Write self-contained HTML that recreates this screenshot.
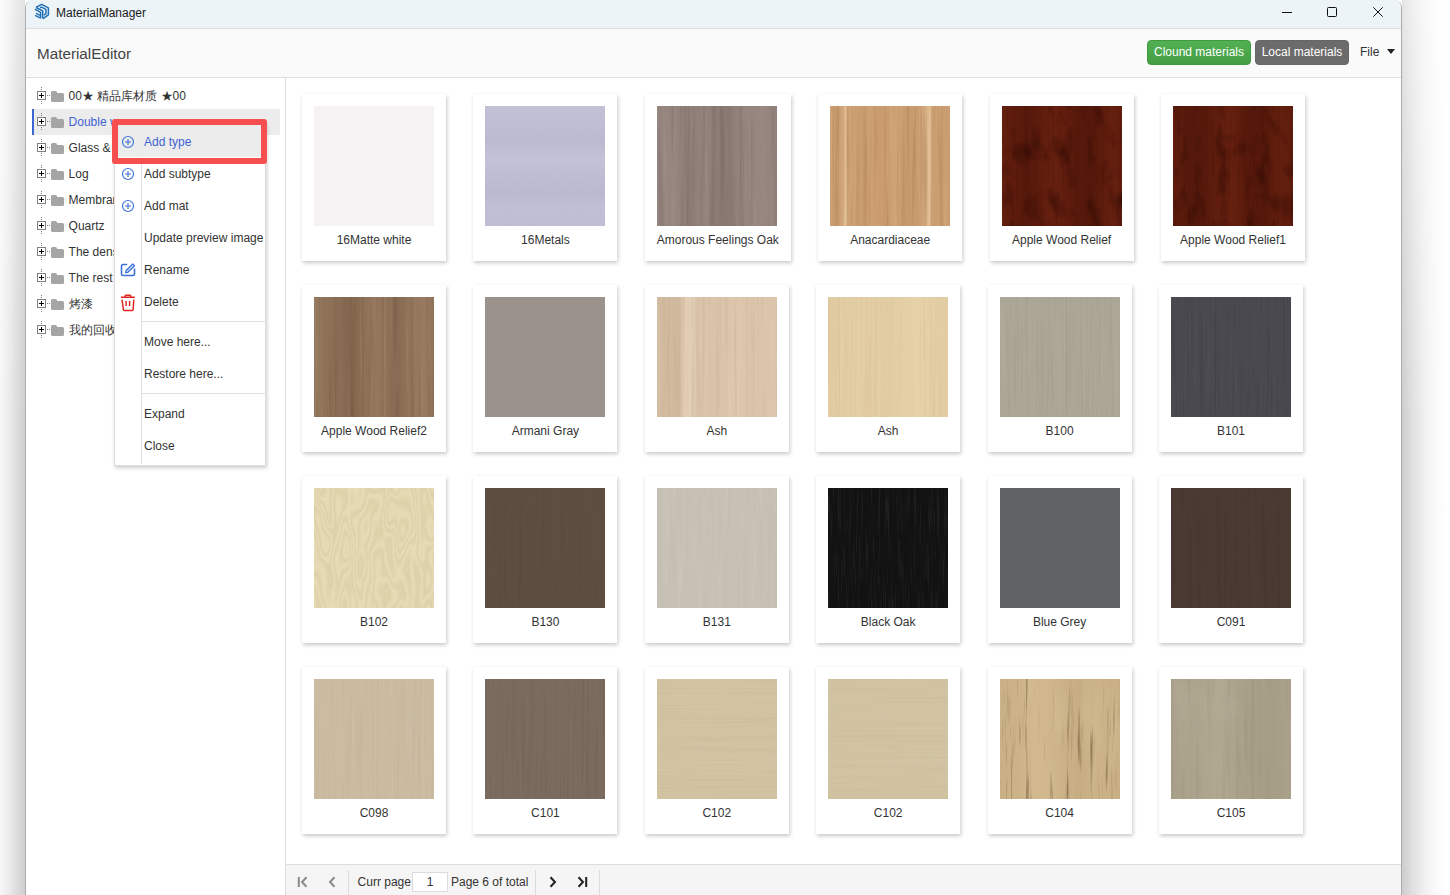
<!DOCTYPE html>
<html><head><meta charset="utf-8">
<style>
*{box-sizing:border-box;margin:0;padding:0}
html,body{width:1450px;height:895px;overflow:hidden}
body{position:relative;font-family:"Liberation Sans",sans-serif;font-size:12px;color:#333;background:#fff}
#shL,#shL2,#shR,#shR2{position:absolute;top:0;height:895px}
#shL,#shL2{left:0;width:25px}
#shR,#shR2{left:1402px;width:48px}
#shL{background:linear-gradient(90deg,#fcfcfc 0,#f5f5f5 8px,#ebebeb 16px,#e3e3e3 25px)}
#shL2{background:linear-gradient(90deg,rgba(0,0,0,.02),rgba(0,0,0,.04) 12px,rgba(0,0,0,.085) 25px);-webkit-mask-image:linear-gradient(180deg,transparent 0,#000 420px,#000 895px);mask-image:linear-gradient(180deg,transparent 0,#000 420px,#000 895px)}
#shR{background:linear-gradient(90deg,#e5e5e5 0,#efefef 10px,#f8f8f8 22px,#fdfdfd 36px,#fff 48px)}
#shR2{background:linear-gradient(90deg,rgba(0,0,0,.1) 0,rgba(0,0,0,.06) 12px,rgba(0,0,0,.02) 28px,transparent 44px);-webkit-mask-image:linear-gradient(180deg,transparent 0,#000 420px,#000 895px);mask-image:linear-gradient(180deg,transparent 0,#000 420px,#000 895px)}
.abs{position:absolute}
#win{position:absolute;left:25px;top:0;width:1377px;height:905px;border-left:1px solid #ababab;border-right:1px solid #ababab;border-top-left-radius:8px;border-top-right-radius:8px;background:#fff;overflow:hidden}
#title{position:absolute;left:0;top:0;width:1375px;height:29px;background:#edf4f8;border-bottom:1px solid #dfdfdf}
#title .t{position:absolute;left:30px;top:6px;font-size:12px;color:#1a1a1a;line-height:14px}
#hdr{position:absolute;left:0;top:29px;width:1375px;height:49px;background:#fafafa;border-bottom:1px solid #dddddd}
#hdr .t{position:absolute;left:11px;top:16px;font-size:15.25px;color:#444;line-height:17px}
.btn{position:absolute;top:11px;height:25px;border-radius:4px;color:#fff;font-size:12px;line-height:23px;text-align:center}
#left{position:absolute;left:0;top:78px;width:260px;height:827px;border-right:1px solid #dedede;background:#fff}
#content{position:absolute;left:260px;top:78px;width:1115px;height:786px;background:#fff}
#pager{position:absolute;left:260px;top:864px;width:1115px;height:41px;background:#f5f5f5;border-top:1px solid #dedede}
.row{position:absolute;left:6px;height:26px;width:248px}
.row.sel{background:#ececec;box-shadow:inset 2px 0 #3a66d0}
.row .tx{position:absolute;left:36.6px;top:6px;line-height:14px;white-space:nowrap;color:#333}
.row.sel .tx{color:#3f63d2}
.row i{position:absolute;display:block}
.row .bx{left:5px;top:8px;width:9px;height:9px;border:1px solid #808080;background:#fff}
.row .bx:before{content:"";position:absolute;left:1px;top:3px;width:5px;height:1px;background:#000}
.row .bx:after{content:"";position:absolute;left:3px;top:1px;width:1px;height:5px;background:#000}
.row .dv{left:9px;top:4px;width:1px;height:17px;background:repeating-linear-gradient(#808080 0 1px,transparent 1px 2px)}
.row .dh{left:15px;top:12px;width:3px;height:1px;background:repeating-linear-gradient(90deg,#808080 0 1px,transparent 1px 2px)}
.row .fd{left:19px;top:10px;width:13px;height:9px;background:#a5a5a5;border-radius:1.5px}
.row .fdt{left:19px;top:8px;width:6px;height:4px;background:#a5a5a5;border-radius:1.5px 1.5px 0 0}
.card{position:absolute;width:144px;height:167px;background:#fff;box-shadow:1px 2px 4px rgba(0,0,0,0.22)}
.card .im{position:absolute;left:12px;top:12px;width:120px;height:120px}
.card .lb{position:absolute;left:0;right:0;top:139px;text-align:center;line-height:14px;color:#333;white-space:nowrap}
#menu{position:absolute;left:88px;top:121px;width:152px;height:345px;background:#fff;border:1px solid #dcdcdc;box-shadow:1px 2px 4px rgba(0,0,0,0.2)}
.mi{position:absolute;left:0;width:150px;height:32px}
.mi.act{background:#ececec}
.mi .tx{position:absolute;left:29px;top:10px;line-height:14px;color:#333;white-space:nowrap}
.mi.act .tx{color:#3f63d2}
.mi .ic{position:absolute}
#msep{position:absolute;left:26px;top:2px;width:1px;height:340px;background:#e0e0e0}
.hsep{position:absolute;left:27px;width:124px;height:1px;background:#e0e0e0}
#red{position:absolute;left:86px;top:119px;width:155px;height:45px;border:6px solid #f74f4f;border-radius:3px}
.pg{position:absolute}
</style></head><body>
<div id="shL"></div><div id="shL2"></div><div id="shR"></div><div id="shR2"></div>
<div id="win">
 <div id="title">
  <svg class="abs" style="left:6px;top:2px" width="20" height="20" viewBox="0 0 20 20"><g fill="none" stroke="#1e6fb5" stroke-width="1.5" stroke-linejoin="round"><path d="M2.9 7.2L8.6 10.3V16.6"/><path d="M4 11.3L8 13.3"/><path d="M3.1 13.4L8 15.8"/><path d="M4 5.4L9.6 2.4L16.4 5.9V12.8L11 16.6"/><path d="M4.2 5.5L10.7 8.9V16.6"/><path d="M8 5.8L9.6 5.1L13.9 7.3V11.6L12 13.3"/></g></svg>
  <div class="t">MaterialManager</div>
  <div class="abs" style="left:1256px;top:12px;width:10px;height:1px;background:#111"></div>
  <div class="abs" style="left:1301px;top:7px;width:10px;height:10px;border:1px solid #111;border-radius:1.5px"></div>
  <svg class="abs" style="left:1347px;top:7px" width="10" height="10" viewBox="0 0 10 10"><path d="M0.3 0.3L9.7 9.7M9.7 0.3L0.3 9.7" stroke="#111" stroke-width="1"/></svg>
 </div>
 <div id="hdr">
  <div class="t">MaterialEditor</div>
  <div class="btn" style="left:1121px;width:104px;background:linear-gradient(#52b052,#449d44);border:1px solid #3f9a3f">Clound materials</div>
  <div class="btn" style="left:1229px;width:94px;background:#6b6b6b;border:1px solid #666">Local materials</div>
  <div class="abs" style="left:1334px;top:16px;line-height:14px;color:#333">File</div>
  <svg class="abs" style="left:1361px;top:20px" width="8" height="5" viewBox="0 0 8 5"><path d="M0 0H8L4 5Z" fill="#222"/></svg>
 </div>
 <div id="left"></div>
 <div id="content"></div>
 <div id="pager"></div>
<div class="row" style="top:83px"><i class="dv"></i><i class="bx"></i><i class="dh"></i><i class="fd"></i><i class="fdt"></i><span class="tx">00★ 精品库材质 ★00</span></div>
<div class="row sel" style="top:109px"><i class="dv"></i><i class="bx"></i><i class="dh"></i><i class="fd"></i><i class="fdt"></i><span class="tx">Double w</span></div>
<div class="row" style="top:135px"><i class="dv"></i><i class="bx"></i><i class="dh"></i><i class="fd"></i><i class="fdt"></i><span class="tx">Glass &amp; Mirror</span></div>
<div class="row" style="top:161px"><i class="dv"></i><i class="bx"></i><i class="dh"></i><i class="fd"></i><i class="fdt"></i><span class="tx">Log</span></div>
<div class="row" style="top:187px"><i class="dv"></i><i class="bx"></i><i class="dh"></i><i class="fd"></i><i class="fdt"></i><span class="tx">Membrane</span></div>
<div class="row" style="top:213px"><i class="dv"></i><i class="bx"></i><i class="dh"></i><i class="fd"></i><i class="fdt"></i><span class="tx">Quartz</span></div>
<div class="row" style="top:239px"><i class="dv"></i><i class="bx"></i><i class="dh"></i><i class="fd"></i><i class="fdt"></i><span class="tx">The density board</span></div>
<div class="row" style="top:265px"><i class="dv"></i><i class="bx"></i><i class="dh"></i><i class="fd"></i><i class="fdt"></i><span class="tx">The rest</span></div>
<div class="row" style="top:291px"><i class="dv"></i><i class="bx"></i><i class="dh"></i><i class="fd"></i><i class="fdt"></i><span class="tx">烤漆</span></div>
<div class="row" style="top:317px"><i class="dv"></i><i class="bx"></i><i class="dh"></i><i class="fd"></i><i class="fdt"></i><span class="tx">我的回收站</span></div>
<div class="card" style="left:276.0px;top:94px;width:144px"><div class="im" style="background:#f6f2f3"></div><div class="lb">16Matte white</div></div>
<div class="card" style="left:447.4px;top:94px;width:144px"><div class="im" style="background:linear-gradient(180deg,#c2c1d6 0px,#bfbed4 18px,#bbbad0 35px,#c3c2d7 53px,#bebdd3 70px,#bab9cf 87px,#c0bfd5 100px,#bfbed4 120px)"><svg width="120" height="120" viewBox="0 0 120 120" style="position:absolute;left:0;top:0"><filter id="f1" x="0" y="0" width="100%" height="100%" color-interpolation-filters="sRGB"><feTurbulence type="fractalNoise" baseFrequency="0.9 0.9" numOctaves="1" seed="2"/><feColorMatrix type="matrix" values="0 0 0 0 0.663 0 0 0 0 0.659 0 0 0 0 0.753 1.200 0 0 0 -0.600"/></filter><rect width="120" height="120" filter="url(#f1)" opacity="0.25"/></svg></div><div class="lb">16Metals</div></div>
<div class="card" style="left:618.8px;top:94px;width:146px"><div class="im" style="background:linear-gradient(90deg,#95857f 0px,#96867f 18px,#8a7a72 32px,#94847e 47px,#87776f 66px,#96867f 86px,#97877f 106px,#91817b 120px)"><svg width="120" height="120" viewBox="0 0 120 120" style="position:absolute;left:0;top:0"><filter id="f2" x="0" y="0" width="100%" height="100%" color-interpolation-filters="sRGB"><feTurbulence type="fractalNoise" baseFrequency="0.22 0.005" numOctaves="3" seed="3"/><feColorMatrix type="matrix" values="0 0 0 0 0.416 0 0 0 0 0.353 0 0 0 0 0.329 -1.600 0 0 0 0.800"/></filter><rect width="120" height="120" filter="url(#f2)" opacity="0.70"/><filter id="f3" x="0" y="0" width="100%" height="100%" color-interpolation-filters="sRGB"><feTurbulence type="fractalNoise" baseFrequency="0.3 0.006" numOctaves="3" seed="33"/><feColorMatrix type="matrix" values="0 0 0 0 0.710 0 0 0 0 0.647 0 0 0 0 0.624 1.400 0 0 0 -0.770"/></filter><rect width="120" height="120" filter="url(#f3)" opacity="0.60"/></svg></div><div class="lb">Amorous Feelings Oak</div></div>
<div class="card" style="left:792.2px;top:94px;width:144px"><div class="im" style="background:linear-gradient(90deg,#cb9e72 0px,#c6996d 8px,#d2a97d 13px,#e2c196 15.5px,#cfa476 18px,#c99c6e 30px,#cea174 40px,#c7996c 55px,#d0a478 65px,#c79a6d 78px,#cb9e72 90px,#d8b387 97px,#e4c398 99.5px,#cc9f72 102px,#c99d71 120px)"><svg width="120" height="120" viewBox="0 0 120 120" style="position:absolute;left:0;top:0"><filter id="f4" x="0" y="0" width="100%" height="100%" color-interpolation-filters="sRGB"><feTurbulence type="fractalNoise" baseFrequency="0.3 0.006" numOctaves="3" seed="4"/><feColorMatrix type="matrix" values="0 0 0 0 0.604 0 0 0 0 0.424 0 0 0 0 0.251 -1.600 0 0 0 0.800"/></filter><rect width="120" height="120" filter="url(#f4)" opacity="0.60"/><filter id="f5" x="0" y="0" width="100%" height="100%" color-interpolation-filters="sRGB"><feTurbulence type="fractalNoise" baseFrequency="0.35 0.006" numOctaves="3" seed="44"/><feColorMatrix type="matrix" values="0 0 0 0 0.910 0 0 0 0 0.784 0 0 0 0 0.627 1.400 0 0 0 -0.770"/></filter><rect width="120" height="120" filter="url(#f5)" opacity="0.50"/></svg></div><div class="lb">Anacardiaceae</div></div>
<div class="card" style="left:963.6px;top:94px;width:144px"><div class="im" style="background:linear-gradient(90deg,#64200f 0px,#5e1c0d 10px,#56190b 25px,#5c1b0c 35px,#66200f 50px,#621e0e 62px,#57190b 75px,#54180a 90px,#5e1c0d 100px,#65200f 110px,#601d0e 120px)"><svg width="120" height="120" viewBox="0 0 120 120" style="position:absolute;left:0;top:0"><filter id="f6" x="0" y="0" width="100%" height="100%" color-interpolation-filters="sRGB"><feTurbulence type="fractalNoise" baseFrequency="0.07 0.035" numOctaves="3" seed="5"/><feColorMatrix type="matrix" values="0 0 0 0 0.165 0 0 0 0 0.031 0 0 0 0 0.012 -2.000 0 0 0 1.000"/></filter><rect width="120" height="120" filter="url(#f6)" opacity="0.70"/><filter id="f7" x="0" y="0" width="100%" height="100%" color-interpolation-filters="sRGB"><feTurbulence type="fractalNoise" baseFrequency="0.4 0.01" numOctaves="3" seed="55"/><feColorMatrix type="matrix" values="0 0 0 0 0.227 0 0 0 0 0.055 0 0 0 0 0.024 -1.500 0 0 0 0.750"/></filter><rect width="120" height="120" filter="url(#f7)" opacity="0.40"/></svg></div><div class="lb">Apple Wood Relief</div></div>
<div class="card" style="left:1135.0px;top:94px;width:144px"><div class="im" style="background:linear-gradient(90deg,#601d0e 0px,#55190b 15px,#56190b 30px,#611e0e 45px,#66200f 60px,#57190b 75px,#54180a 90px,#631f0e 105px,#601d0e 120px)"><svg width="120" height="120" viewBox="0 0 120 120" style="position:absolute;left:0;top:0"><filter id="f8" x="0" y="0" width="100%" height="100%" color-interpolation-filters="sRGB"><feTurbulence type="fractalNoise" baseFrequency="0.07 0.035" numOctaves="3" seed="6"/><feColorMatrix type="matrix" values="0 0 0 0 0.165 0 0 0 0 0.031 0 0 0 0 0.012 -2.000 0 0 0 1.000"/></filter><rect width="120" height="120" filter="url(#f8)" opacity="0.70"/><filter id="f9" x="0" y="0" width="100%" height="100%" color-interpolation-filters="sRGB"><feTurbulence type="fractalNoise" baseFrequency="0.4 0.01" numOctaves="3" seed="66"/><feColorMatrix type="matrix" values="0 0 0 0 0.227 0 0 0 0 0.055 0 0 0 0 0.024 -1.500 0 0 0 0.750"/></filter><rect width="120" height="120" filter="url(#f9)" opacity="0.40"/></svg></div><div class="lb">Apple Wood Relief1</div></div>
<div class="card" style="left:276.0px;top:285px;width:144px"><div class="im" style="background:linear-gradient(90deg,#96795f 0px,#8e7258 12px,#896d54 25px,#81654c 38px,#8b6f55 48px,#95785e 60px,#8f7359 72px,#856950 82px,#91755b 95px,#977a60 110px,#8f7359 120px)"><svg width="120" height="120" viewBox="0 0 120 120" style="position:absolute;left:0;top:0"><filter id="f10" x="0" y="0" width="100%" height="100%" color-interpolation-filters="sRGB"><feTurbulence type="fractalNoise" baseFrequency="0.25 0.006" numOctaves="3" seed="7"/><feColorMatrix type="matrix" values="0 0 0 0 0.396 0 0 0 0 0.302 0 0 0 0 0.220 -1.600 0 0 0 0.800"/></filter><rect width="120" height="120" filter="url(#f10)" opacity="0.55"/><filter id="f11" x="0" y="0" width="100%" height="100%" color-interpolation-filters="sRGB"><feTurbulence type="fractalNoise" baseFrequency="0.3 0.008" numOctaves="3" seed="77"/><feColorMatrix type="matrix" values="0 0 0 0 0.702 0 0 0 0 0.604 0 0 0 0 0.510 1.600 0 0 0 -0.880"/></filter><rect width="120" height="120" filter="url(#f11)" opacity="0.50"/></svg></div><div class="lb">Apple Wood Relief2</div></div>
<div class="card" style="left:447.4px;top:285px;width:144px"><div class="im" style="background:#9b928c"></div><div class="lb">Armani Gray</div></div>
<div class="card" style="left:618.8px;top:285px;width:144px"><div class="im" style="background:linear-gradient(90deg,#d3bba0 0px,#d1b99e 22px,#e0cbb2 28px,#e3cfb7 33px,#dbc4a9 40px,#d9c2a7 60px,#ddc6ab 80px,#dac3a8 100px,#dcc5aa 120px)"><svg width="120" height="120" viewBox="0 0 120 120" style="position:absolute;left:0;top:0"><filter id="f12" x="0" y="0" width="100%" height="100%" color-interpolation-filters="sRGB"><feTurbulence type="fractalNoise" baseFrequency="0.35 0.006" numOctaves="3" seed="8"/><feColorMatrix type="matrix" values="0 0 0 0 0.690 0 0 0 0 0.596 0 0 0 0 0.502 -1.500 0 0 0 0.750"/></filter><rect width="120" height="120" filter="url(#f12)" opacity="0.50"/><filter id="f13" x="0" y="0" width="100%" height="100%" color-interpolation-filters="sRGB"><feTurbulence type="fractalNoise" baseFrequency="0.4 0.006" numOctaves="3" seed="88"/><feColorMatrix type="matrix" values="0 0 0 0 0.941 0 0 0 0 0.878 0 0 0 0 0.800 1.500 0 0 0 -0.825"/></filter><rect width="120" height="120" filter="url(#f13)" opacity="0.50"/></svg></div><div class="lb">Ash</div></div>
<div class="card" style="left:790.2px;top:285px;width:144px"><div class="im" style="background:linear-gradient(90deg,#e0caa1 0px,#e4cea5 30px,#e2cca3 60px,#e6d1a8 90px,#e2cca3 120px)"><svg width="120" height="120" viewBox="0 0 120 120" style="position:absolute;left:0;top:0"><filter id="f14" x="0" y="0" width="100%" height="100%" color-interpolation-filters="sRGB"><feTurbulence type="fractalNoise" baseFrequency="0.4 0.006" numOctaves="3" seed="9"/><feColorMatrix type="matrix" values="0 0 0 0 0.753 0 0 0 0 0.659 0 0 0 0 0.502 -1.300 0 0 0 0.650"/></filter><rect width="120" height="120" filter="url(#f14)" opacity="0.45"/><filter id="f15" x="0" y="0" width="100%" height="100%" color-interpolation-filters="sRGB"><feTurbulence type="fractalNoise" baseFrequency="0.4 0.006" numOctaves="3" seed="99"/><feColorMatrix type="matrix" values="0 0 0 0 0.949 0 0 0 0 0.894 0 0 0 0 0.769 1.300 0 0 0 -0.715"/></filter><rect width="120" height="120" filter="url(#f15)" opacity="0.50"/></svg></div><div class="lb">Ash</div></div>
<div class="card" style="left:961.6px;top:285px;width:144px"><div class="im" style="background:#aca697"><svg width="120" height="120" viewBox="0 0 120 120" style="position:absolute;left:0;top:0"><filter id="f16" x="0" y="0" width="100%" height="100%" color-interpolation-filters="sRGB"><feTurbulence type="fractalNoise" baseFrequency="0.5 0.008" numOctaves="3" seed="10"/><feColorMatrix type="matrix" values="0 0 0 0 0.541 0 0 0 0 0.518 0 0 0 0 0.459 -1.500 0 0 0 0.750"/></filter><rect width="120" height="120" filter="url(#f16)" opacity="0.50"/><filter id="f17" x="0" y="0" width="100%" height="100%" color-interpolation-filters="sRGB"><feTurbulence type="fractalNoise" baseFrequency="0.5 0.008" numOctaves="3" seed="110"/><feColorMatrix type="matrix" values="0 0 0 0 0.769 0 0 0 0 0.745 0 0 0 0 0.690 1.500 0 0 0 -0.750"/></filter><rect width="120" height="120" filter="url(#f17)" opacity="0.40"/></svg></div><div class="lb">B100</div></div>
<div class="card" style="left:1133.0px;top:285px;width:144px"><div class="im" style="background:#4a4950"><svg width="120" height="120" viewBox="0 0 120 120" style="position:absolute;left:0;top:0"><filter id="f18" x="0" y="0" width="100%" height="100%" color-interpolation-filters="sRGB"><feTurbulence type="fractalNoise" baseFrequency="0.5 0.008" numOctaves="3" seed="11"/><feColorMatrix type="matrix" values="0 0 0 0 0.180 0 0 0 0 0.176 0 0 0 0 0.200 -1.500 0 0 0 0.750"/></filter><rect width="120" height="120" filter="url(#f18)" opacity="0.50"/><filter id="f19" x="0" y="0" width="100%" height="100%" color-interpolation-filters="sRGB"><feTurbulence type="fractalNoise" baseFrequency="0.5 0.008" numOctaves="3" seed="111"/><feColorMatrix type="matrix" values="0 0 0 0 0.416 0 0 0 0 0.412 0 0 0 0 0.439 1.500 0 0 0 -0.825"/></filter><rect width="120" height="120" filter="url(#f19)" opacity="0.40"/></svg></div><div class="lb">B101</div></div>
<div class="card" style="left:276.0px;top:476px;width:144px"><div class="im" style="background:#e7dcb7"><svg width="120" height="120" viewBox="0 0 120 120" style="position:absolute;left:0;top:0"><filter id="f20" x="0" y="0" width="100%" height="100%" color-interpolation-filters="sRGB"><feTurbulence type="fractalNoise" baseFrequency="0.05 0.016" numOctaves="2" seed="12"/><feComponentTransfer><feFuncR type="table" tableValues="0 1 0 1 0 1 0 1 0 1 0 1 0 1 0 1 0"/></feComponentTransfer><feColorMatrix type="matrix" values="0 0 0 0 0.804 0 0 0 0 0.749 0 0 0 0 0.573 1.000 0 0 0 -0.000"/></filter><rect width="120" height="120" filter="url(#f20)" opacity="0.40"/></svg></div><div class="lb">B102</div></div>
<div class="card" style="left:447.4px;top:476px;width:144px"><div class="im" style="background:#5e4e42"><svg width="120" height="120" viewBox="0 0 120 120" style="position:absolute;left:0;top:0"><filter id="f21" x="0" y="0" width="100%" height="100%" color-interpolation-filters="sRGB"><feTurbulence type="fractalNoise" baseFrequency="0.5 0.008" numOctaves="3" seed="13"/><feColorMatrix type="matrix" values="0 0 0 0 0.275 0 0 0 0 0.220 0 0 0 0 0.180 -1.300 0 0 0 0.650"/></filter><rect width="120" height="120" filter="url(#f21)" opacity="0.40"/></svg></div><div class="lb">B130</div></div>
<div class="card" style="left:618.8px;top:476px;width:144px"><div class="im" style="background:#c7c0b4"><svg width="120" height="120" viewBox="0 0 120 120" style="position:absolute;left:0;top:0"><filter id="f22" x="0" y="0" width="100%" height="100%" color-interpolation-filters="sRGB"><feTurbulence type="fractalNoise" baseFrequency="0.15 0.01" numOctaves="3" seed="14"/><feColorMatrix type="matrix" values="0 0 0 0 0.847 0 0 0 0 0.827 0 0 0 0 0.792 1.600 0 0 0 -0.800"/></filter><rect width="120" height="120" filter="url(#f22)" opacity="0.60"/><filter id="f23" x="0" y="0" width="100%" height="100%" color-interpolation-filters="sRGB"><feTurbulence type="fractalNoise" baseFrequency="0.3 0.01" numOctaves="3" seed="114"/><feColorMatrix type="matrix" values="0 0 0 0 0.675 0 0 0 0 0.647 0 0 0 0 0.596 -1.300 0 0 0 0.650"/></filter><rect width="120" height="120" filter="url(#f23)" opacity="0.30"/></svg></div><div class="lb">B131</div></div>
<div class="card" style="left:790.2px;top:476px;width:144px"><div class="im" style="background:#121212"><svg width="120" height="120" viewBox="0 0 120 120" style="position:absolute;left:0;top:0"><filter id="f24" x="0" y="0" width="100%" height="100%" color-interpolation-filters="sRGB"><feTurbulence type="fractalNoise" baseFrequency="0.6 0.02" numOctaves="3" seed="15"/><feColorMatrix type="matrix" values="0 0 0 0 0.227 0 0 0 0 0.227 0 0 0 0 0.227 2.000 0 0 0 -1.000"/></filter><rect width="120" height="120" filter="url(#f24)" opacity="0.60"/></svg></div><div class="lb">Black Oak</div></div>
<div class="card" style="left:961.6px;top:476px;width:144px"><div class="im" style="background:#5f6364"></div><div class="lb">Blue Grey</div></div>
<div class="card" style="left:1133.0px;top:476px;width:144px"><div class="im" style="background:#4b3934"><svg width="120" height="120" viewBox="0 0 120 120" style="position:absolute;left:0;top:0"><filter id="f25" x="0" y="0" width="100%" height="100%" color-interpolation-filters="sRGB"><feTurbulence type="fractalNoise" baseFrequency="0.3 0.006" numOctaves="3" seed="16"/><feColorMatrix type="matrix" values="0 0 0 0 0.212 0 0 0 0 0.149 0 0 0 0 0.122 -1.300 0 0 0 0.650"/></filter><rect width="120" height="120" filter="url(#f25)" opacity="0.40"/></svg></div><div class="lb">C091</div></div>
<div class="card" style="left:276.0px;top:667px;width:144px"><div class="im" style="background:#cabba1"><svg width="120" height="120" viewBox="0 0 120 120" style="position:absolute;left:0;top:0"><filter id="f26" x="0" y="0" width="100%" height="100%" color-interpolation-filters="sRGB"><feTurbulence type="fractalNoise" baseFrequency="0.35 0.008" numOctaves="3" seed="17"/><feColorMatrix type="matrix" values="0 0 0 0 0.659 0 0 0 0 0.600 0 0 0 0 0.502 -1.300 0 0 0 0.650"/></filter><rect width="120" height="120" filter="url(#f26)" opacity="0.40"/><filter id="f27" x="0" y="0" width="100%" height="100%" color-interpolation-filters="sRGB"><feTurbulence type="fractalNoise" baseFrequency="0.35 0.008" numOctaves="3" seed="117"/><feColorMatrix type="matrix" values="0 0 0 0 0.878 0 0 0 0 0.831 0 0 0 0 0.737 1.300 0 0 0 -0.715"/></filter><rect width="120" height="120" filter="url(#f27)" opacity="0.40"/></svg></div><div class="lb">C098</div></div>
<div class="card" style="left:447.4px;top:667px;width:144px"><div class="im" style="background:#7b6b5e"><svg width="120" height="120" viewBox="0 0 120 120" style="position:absolute;left:0;top:0"><filter id="f28" x="0" y="0" width="100%" height="100%" color-interpolation-filters="sRGB"><feTurbulence type="fractalNoise" baseFrequency="0.4 0.008" numOctaves="3" seed="18"/><feColorMatrix type="matrix" values="0 0 0 0 0.361 0 0 0 0 0.306 0 0 0 0 0.259 -1.300 0 0 0 0.650"/></filter><rect width="120" height="120" filter="url(#f28)" opacity="0.45"/><filter id="f29" x="0" y="0" width="100%" height="100%" color-interpolation-filters="sRGB"><feTurbulence type="fractalNoise" baseFrequency="0.4 0.008" numOctaves="3" seed="118"/><feColorMatrix type="matrix" values="0 0 0 0 0.584 0 0 0 0 0.522 0 0 0 0 0.467 1.300 0 0 0 -0.715"/></filter><rect width="120" height="120" filter="url(#f29)" opacity="0.35"/></svg></div><div class="lb">C101</div></div>
<div class="card" style="left:618.8px;top:667px;width:144px"><div class="im" style="background:#d1c3a2"><svg width="120" height="120" viewBox="0 0 120 120" style="position:absolute;left:0;top:0"><filter id="f30" x="0" y="0" width="100%" height="100%" color-interpolation-filters="sRGB"><feTurbulence type="fractalNoise" baseFrequency="0.006 0.5" numOctaves="3" seed="19"/><feColorMatrix type="matrix" values="0 0 0 0 0.706 0 0 0 0 0.651 0 0 0 0 0.518 -1.300 0 0 0 0.650"/></filter><rect width="120" height="120" filter="url(#f30)" opacity="0.40"/><filter id="f31" x="0" y="0" width="100%" height="100%" color-interpolation-filters="sRGB"><feTurbulence type="fractalNoise" baseFrequency="0.006 0.5" numOctaves="3" seed="119"/><feColorMatrix type="matrix" values="0 0 0 0 0.902 0 0 0 0 0.855 0 0 0 0 0.753 1.300 0 0 0 -0.715"/></filter><rect width="120" height="120" filter="url(#f31)" opacity="0.40"/></svg></div><div class="lb">C102</div></div>
<div class="card" style="left:790.2px;top:667px;width:144px"><div class="im" style="background:#d1c3a2"><svg width="120" height="120" viewBox="0 0 120 120" style="position:absolute;left:0;top:0"><filter id="f32" x="0" y="0" width="100%" height="100%" color-interpolation-filters="sRGB"><feTurbulence type="fractalNoise" baseFrequency="0.006 0.5" numOctaves="3" seed="20"/><feColorMatrix type="matrix" values="0 0 0 0 0.706 0 0 0 0 0.651 0 0 0 0 0.518 -1.300 0 0 0 0.650"/></filter><rect width="120" height="120" filter="url(#f32)" opacity="0.40"/><filter id="f33" x="0" y="0" width="100%" height="100%" color-interpolation-filters="sRGB"><feTurbulence type="fractalNoise" baseFrequency="0.006 0.5" numOctaves="3" seed="120"/><feColorMatrix type="matrix" values="0 0 0 0 0.902 0 0 0 0 0.855 0 0 0 0 0.753 1.300 0 0 0 -0.715"/></filter><rect width="120" height="120" filter="url(#f33)" opacity="0.40"/></svg></div><div class="lb">C102</div></div>
<div class="card" style="left:961.6px;top:667px;width:144px"><div class="im" style="background:linear-gradient(90deg,#c9b086 0px,#ccb389 20px,#d2b98f 35px,#cfb68c 50px,#cab187 65px,#c6ad83 80px,#cbb288 100px,#c8af85 120px)"><svg width="120" height="120" viewBox="0 0 120 120" style="position:absolute;left:0;top:0"><filter id="f34" x="0" y="0" width="100%" height="100%" color-interpolation-filters="sRGB"><feTurbulence type="fractalNoise" baseFrequency="0.2 0.01" numOctaves="3" seed="21"/><feColorMatrix type="matrix" values="0 0 0 0 0.490 0 0 0 0 0.392 0 0 0 0 0.251 -4.000 0 0 0 1.520"/></filter><rect width="120" height="120" filter="url(#f34)" opacity="0.85"/><filter id="f35" x="0" y="0" width="100%" height="100%" color-interpolation-filters="sRGB"><feTurbulence type="fractalNoise" baseFrequency="0.3 0.012" numOctaves="3" seed="221"/><feColorMatrix type="matrix" values="0 0 0 0 0.553 0 0 0 0 0.455 0 0 0 0 0.314 -3.000 0 0 0 1.080"/></filter><rect width="120" height="120" filter="url(#f35)" opacity="0.60"/><filter id="f36" x="0" y="0" width="100%" height="100%" color-interpolation-filters="sRGB"><feTurbulence type="fractalNoise" baseFrequency="0.05 0.01" numOctaves="3" seed="121"/><feColorMatrix type="matrix" values="0 0 0 0 0.863 0 0 0 0 0.784 0 0 0 0 0.635 2.000 0 0 0 -1.100"/></filter><rect width="120" height="120" filter="url(#f36)" opacity="0.50"/></svg></div><div class="lb">C104</div></div>
<div class="card" style="left:1133.0px;top:667px;width:144px"><div class="im" style="background:linear-gradient(90deg,#a9a08a 0px,#aea58f 30px,#b1a892 50px,#aaa18b 70px,#a69d87 100px,#aba28c 120px)"><svg width="120" height="120" viewBox="0 0 120 120" style="position:absolute;left:0;top:0"><filter id="f37" x="0" y="0" width="100%" height="100%" color-interpolation-filters="sRGB"><feTurbulence type="fractalNoise" baseFrequency="0.2 0.008" numOctaves="3" seed="22"/><feColorMatrix type="matrix" values="0 0 0 0 0.541 0 0 0 0 0.510 0 0 0 0 0.424 -1.500 0 0 0 0.750"/></filter><rect width="120" height="120" filter="url(#f37)" opacity="0.50"/><filter id="f38" x="0" y="0" width="100%" height="100%" color-interpolation-filters="sRGB"><feTurbulence type="fractalNoise" baseFrequency="0.05 0.015" numOctaves="3" seed="122"/><feColorMatrix type="matrix" values="0 0 0 0 0.753 0 0 0 0 0.722 0 0 0 0 0.635 1.800 0 0 0 -0.990"/></filter><rect width="120" height="120" filter="url(#f38)" opacity="0.50"/></svg></div><div class="lb">C105</div></div>
 <div id="menu">
  <div id="msep"></div>
  <div class="hsep" style="top:199px"></div>
  <div class="hsep" style="top:271px"></div>
<div class="mi act" style="top:3px"><svg class="ic" style="left:6px;top:10px" width="14" height="14" viewBox="0 0 14 14"><circle cx="7" cy="7" r="5.5" fill="none" stroke="#3b72d9" stroke-width="1.15"/><path d="M7 4V10M4 7H10" stroke="#3b72d9" stroke-width="1.15"/></svg><span class="tx">Add type</span></div>
<div class="mi" style="top:35px"><svg class="ic" style="left:6px;top:10px" width="14" height="14" viewBox="0 0 14 14"><circle cx="7" cy="7" r="5.5" fill="none" stroke="#3b72d9" stroke-width="1.15"/><path d="M7 4V10M4 7H10" stroke="#3b72d9" stroke-width="1.15"/></svg><span class="tx">Add subtype</span></div>
<div class="mi" style="top:67px"><svg class="ic" style="left:6px;top:10px" width="14" height="14" viewBox="0 0 14 14"><circle cx="7" cy="7" r="5.5" fill="none" stroke="#3b72d9" stroke-width="1.15"/><path d="M7 4V10M4 7H10" stroke="#3b72d9" stroke-width="1.15"/></svg><span class="tx">Add mat</span></div>
<div class="mi" style="top:99px"><span class="tx">Update preview image</span></div>
<div class="mi" style="top:131px"><svg class="ic" style="left:5px;top:9px" width="16" height="16" viewBox="0 0 16 16"><path d="M7.2 2.5H3.2Q1.5 2.5 1.5 4.2V11.8Q1.5 13.5 3.2 13.5H12.8Q14.5 13.5 14.5 11.8V6.6" fill="none" stroke="#3b72d9" stroke-width="1.6"/><path d="M5.6 10.6L6.1 8.5L12.7 1.9L14.5 3.7L7.9 10.3Z" fill="#3b72d9" fill-opacity=".25" stroke="#3b72d9" stroke-width="1.3" stroke-linejoin="round"/></svg><span class="tx">Rename</span></div>
<div class="mi" style="top:163px"><svg class="ic" style="left:5px;top:8.5px" width="16" height="18" viewBox="0 0 16 18"><path d="M1 3.2H14.8M5.1 3V2Q5.1 1.2 6 1.2H10Q10.8 1.2 10.8 2V3M2 5.6L3.4 15.6Q3.5 16.4 4.3 16.4H12.2Q13 16.4 13.1 15.6L13.8 5.6M6.1 7V12M9.6 7V12" fill="none" stroke="#e0271f" stroke-width="1.45"/></svg><span class="tx">Delete</span></div>
<div class="mi" style="top:203px"><span class="tx">Move here...</span></div>
<div class="mi" style="top:235px"><span class="tx">Restore here...</span></div>
<div class="mi" style="top:275px"><span class="tx">Expand</span></div>
<div class="mi" style="top:307px"><span class="tx">Close</span></div>
 </div>
 <div id="red"></div>
 <!-- pager -->
 <svg class="pg" style="left:271px;top:876px" width="11" height="12" viewBox="0 0 11 12"><path d="M1.8 1V11M9.5 1.2L5 6L9.5 10.8" fill="none" stroke="#8a8a8a" stroke-width="2"/></svg>
 <svg class="pg" style="left:302px;top:876px" width="8" height="12" viewBox="0 0 8 12"><path d="M6.5 1.2L2 6L6.5 10.8" fill="none" stroke="#8a8a8a" stroke-width="2"/></svg>
 <div class="pg" style="left:322px;top:870px;width:1px;height:25px;background:#dcdcdc"></div>
 <div class="pg" style="left:331.6px;top:875px;line-height:14px;color:#333">Curr page</div>
 <div class="pg" style="left:386px;top:872px;width:36px;height:20px;background:#fff;border:1px solid #dcdcdc;text-align:center;line-height:18px;color:#333">1</div>
 <div class="pg" style="left:425px;top:875px;line-height:14px;color:#333">Page 6 of total</div>
 <div class="pg" style="left:509px;top:870px;width:1px;height:25px;background:#dcdcdc"></div>
 <svg class="pg" style="left:523px;top:876px" width="8" height="12" viewBox="0 0 8 12"><path d="M1.5 1.2L6 6L1.5 10.8" fill="none" stroke="#222" stroke-width="2"/></svg>
 <svg class="pg" style="left:551px;top:876px" width="11" height="12" viewBox="0 0 11 12"><path d="M1.5 1.2L6 6L1.5 10.8M9.2 1V11" fill="none" stroke="#222" stroke-width="2"/></svg>
 <div class="pg" style="left:573px;top:870px;width:1px;height:25px;background:#dcdcdc"></div>
</div>
</body></html>
